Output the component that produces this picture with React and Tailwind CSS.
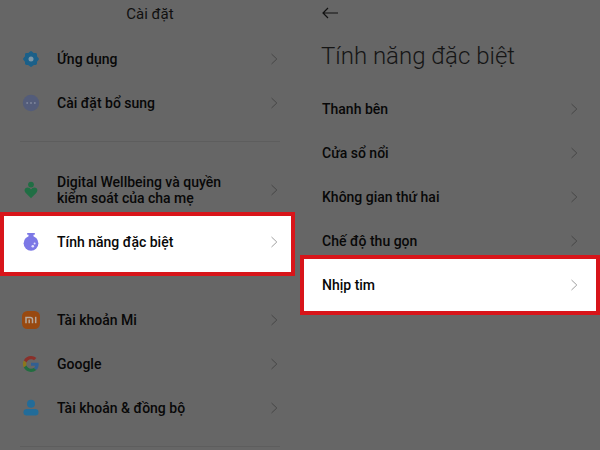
const ChevronIcon = () => (
  <svg viewBox="0 0 8 12" className="h-3 w-2 shrink-0" fill="none" stroke="currentColor" strokeWidth="1">
    <path d="M1.5 1 6.8 6 1.5 11" />
  </svg>
);

const GearIcon = () => (
  <svg viewBox="0 0 18 18" className="size-[18px]">
    <g fill="#1b6089">
      <circle cx="9" cy="9" r="6.6" />
      <rect x="3" y="3" width="12" height="12" rx="1.4" />
      <rect x="3" y="3" width="12" height="12" rx="1.4" transform="rotate(45 9 9)" />
    </g>
    <circle cx="9" cy="9" r="2.5" fill="#7b95a6" />
  </svg>
);

const DotsIcon = () => (
  <svg viewBox="0 0 18 18" className="size-[18px]">
    <circle cx="9" cy="9" r="8.2" fill="#535c7a" />
    <g fill="#7d849b">
      <circle cx="5.2" cy="9" r="1" />
      <circle cx="9" cy="9" r="1" />
      <circle cx="12.8" cy="9" r="1" />
    </g>
  </svg>
);

const WellbeingIcon = () => (
  <svg viewBox="0 0 18 18" className="size-[18px]" fill="#206e44">
    <circle cx="9" cy="3.6" r="2.9" />
    <path d="M9 17.2 3.8 12C1.4 9.4 3 6.5 5.5 6.5c1.6 0 2.7.8 3.5 1.9.8-1.1 1.9-1.9 3.5-1.9 2.5 0 4.1 2.9 1.7 5.5Z" />
  </svg>
);

const FlaskIcon = () => (
  <svg viewBox="0 0 18 18" className="size-[18px]" fill="#7c78e6">
    <rect x="5" y="0" width="8" height="1.7" rx=".8" />
    <path d="M6.5 1h5v3h-5z" />
    <circle cx="9" cy="10.3" r="7.4" />
    <g fill="#e4e2ff">
      <circle cx="12.6" cy="10.6" r="1" />
      <circle cx="10.8" cy="13.2" r="1.3" />
    </g>
  </svg>
);

const MiIcon = () => (
  <svg viewBox="0 0 18 18" className="size-[18px]">
    <rect width="18" height="18" rx="5.4" fill="#984910" />
    <g fill="none" stroke="#b3a99f" strokeWidth="1.5">
      <path d="M4 12.2V6.5h4.4c1.4 0 2.1.7 2.1 2v3.7M7.2 8.6v3.6" />
      <path d="M13.7 5.8v6.4" />
    </g>
  </svg>
);

const GoogleIcon = () => (
  <svg viewBox="0 0 48 48" className="size-4">
    <path fill="#8a302a" d="M24 9.5c3.5 0 6.7 1.2 9.2 3.6l6.9-6.9C35.9 2.4 30.5 0 24 0 14.6 0 6.5 5.4 2.6 13.2l8 6.2C12.4 13.7 17.7 9.5 24 9.5Z" />
    <path fill="#315f92" d="M47 24.6c0-1.6-.2-3.1-.4-4.6H24v9h12.9c-.6 3-2.3 5.5-4.8 7.2l7.7 6C44.4 38 47 31.8 47 24.6Z" />
    <path fill="#8c771c" d="M10.5 28.6A14.5 14.5 0 0 1 10.5 19.4l-8-6.2a24 24 0 0 0 0 21.6Z" />
    <path fill="#226d40" d="M24 48c6.5 0 11.9-2.1 15.9-5.8l-7.7-6c-2.2 1.5-4.9 2.3-8.2 2.3-6.3 0-11.6-4.2-13.5-9.9l-8 6.2C6.5 42.6 14.6 48 24 48Z" />
  </svg>
);

const PersonIcon = () => (
  <svg viewBox="0 0 18 18" className="size-[18px]" fill="#226c99">
    <circle cx="9" cy="4.8" r="4" />
    <rect x="1.5" y="10" width="15" height="6.4" rx="3.2" />
  </svg>
);

const SettingRow = ({ icon: Icon, label }) => (
  <button type="button" className="flex h-11 w-full items-center pl-[21px] pr-[22px] text-left">
    <span className="flex w-5 shrink-0 justify-center">
      <Icon />
    </span>
    <span className="ml-4 flex-1 text-sm/4 font-medium">{label}</span>
    <span className="text-[#464646]">
      <ChevronIcon />
    </span>
  </button>
);

const FeatureRow = ({ label }) => (
  <button type="button" className="flex h-11 w-full items-center pl-[22px] pr-[22px] text-left">
    <span className="flex-1 text-sm/4 font-medium">{label}</span>
    <span className="text-[#464646]">
      <ChevronIcon />
    </span>
  </button>
);

const Divider = () => <hr className="mx-5 border-[#5d5d5d]" />;

const SettingsPanel = () => (
  <section className="pb-2">
    <h1 className="pb-3 pt-1 text-center text-[15px]/5 text-[#101010]">Cài đặt</h1>
    <div className="pt-px">
      <SettingRow icon={GearIcon} label="Ứng dụng" />
      <SettingRow icon={DotsIcon} label="Cài đặt bổ sung" />
    </div>

    <div className="py-4">
      <Divider />
    </div>

    <div className="pt-[10px]">
      <SettingRow
        icon={WellbeingIcon}
        label={
          <>
            Digital Wellbeing và quyền
            <br />
            kiểm soát của cha mẹ
          </>
        }
      />
    </div>

    {/* Highlighted entry */}
    <div className="mr-[5px] border-4 border-[#d8151a] bg-white pb-1">
      <button type="button" className="flex h-[52px] w-full items-center pl-[17px] pr-[13px] text-left">
        <span className="flex w-5 shrink-0 justify-center">
          <FlaskIcon />
        </span>
        <span className="ml-4 flex-1 text-sm/4 font-medium">Tính năng đặc biệt</span>
        <span className="text-[#a0a0a0]">
          <ChevronIcon />
        </span>
      </button>
    </div>

    <div className="pb-4 pt-[22px]">
      <SettingRow icon={MiIcon} label="Tài khoản Mi" />
      <SettingRow icon={GoogleIcon} label="Google" />
      <SettingRow icon={PersonIcon} label="Tài khoản & đồng bộ" />
    </div>
    <Divider />
  </section>
);

const FeaturesPanel = () => (
  <section>
    <button type="button" aria-label="Quay lại" className="ml-[22px] mt-[7px] block">
      <svg viewBox="0 0 16 12" className="h-3 w-4" fill="none" stroke="#111" strokeWidth="1.2">
        <path d="M6 1 1 6l5 5M1 6h15" />
      </svg>
    </button>
    <h2 className="mb-4 ml-[21px] mt-[22px] text-2xl/[30px] font-light text-[#151515]">Tính năng đặc biệt</h2>
    <FeatureRow label="Thanh bên" />
    <FeatureRow label="Cửa sổ nổi" />
    <FeatureRow label="Không gian thứ hai" />
    <FeatureRow label="Chế độ thu gọn" />

    {/* Highlighted entry, overlapping the bottom of the row above */}
    <div className="relative -mt-2 border-4 border-[#d8151a] bg-white">
      <button type="button" className="flex h-[52px] w-full items-center pl-[18px] pr-[18px] text-left">
        <span className="flex-1 text-sm/4 font-medium">Nhịp tim</span>
        <span className="text-[#a0a0a0]">
          <ChevronIcon />
        </span>
      </button>
    </div>
  </section>
);

export default function App() {
  return (
    <main className="grid min-h-screen grid-cols-2 bg-[#666] font-[Roboto,sans-serif] text-[#080808]">
      <SettingsPanel />
      <FeaturesPanel />
    </main>
  );
}
